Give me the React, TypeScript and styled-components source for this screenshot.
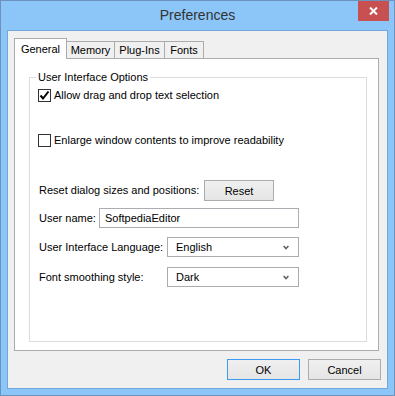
import styled, { createGlobalStyle } from "styled-components";

const GlobalStyle = createGlobalStyle`
  html, body {
    margin: 0;
    padding: 0;
  }
  body {
    font-family: "Liberation Sans", Arial, sans-serif;
    font-size: 11px;
    color: #000;
    background: #fff;
  }
  * {
    box-sizing: border-box;
  }
`;

const Window = styled.div`
  width: 395px;
  height: 396px;
  display: flex;
  flex-direction: column;
  background-color: #8cc5f7;
  border: 1px solid #6b93bd;
  padding: 0 6px 6px;
`;

const TitleBar = styled.div`
  height: 29px;
  display: grid;
  grid-template-columns: 1fr auto 1fr;
  align-items: start;
`;

const Title = styled.div`
  grid-column: 2;
  line-height: 29px;
  font-size: 14px;
  color: #333;
`;

const CloseButton = styled.div`
  grid-column: 3;
  justify-self: end;
  width: 31px;
  height: 20px;
  margin-right: -1px;
  background-color: #c75050;
  display: flex;
  align-items: center;
  justify-content: center;
`;

const Client = styled.div`
  flex: 1;
  display: flex;
  flex-direction: column;
  background-color: #f0f0f0;
  border: 1px solid #73a7da;
  padding: 7px 8px 8px 6px;
`;

const TabStrip = styled.div`
  height: 20px;
  display: flex;
  align-items: flex-end;
`;

const Tab = styled.div<{ $active?: boolean; $width: number }>`
  position: relative;
  width: ${({ $width }) => $width}px;
  height: ${({ $active }) => ($active ? "21px" : "17px")};
  margin-bottom: ${({ $active }) => ($active ? "-1px" : "0")};
  margin-left: -1px;
  padding: ${({ $active }) => ($active ? "3px 0 0" : "1px 0 0")};
  border: 1px solid #acacac;
  border-bottom: none;
  background-color: ${({ $active }) => ($active ? "#fff" : "#f0f0f0")};
  z-index: ${({ $active }) => ($active ? 2 : 1)};
  text-align: center;
  line-height: 15px;
  &:first-child {
    margin-left: 0;
  }
`;

const Panel = styled.div`
  flex: 1;
  display: flex;
  flex-direction: column;
  background-color: #fff;
  border: 1px solid #acacac;
`;

const GroupBox = styled.div`
  flex: 1;
  display: flex;
  flex-direction: column;
  margin: 18px 11px 8px 14px;
  padding: 0 8px;
  border: 1px solid #dcdcdc;
`;

const Legend = styled.div`
  align-self: flex-start;
  margin: -8px 0 0 -2px;
  padding: 0 2px;
  line-height: 15px;
  background-color: #fff;
`;

const CheckRow = styled.label<{ $top: number }>`
  display: flex;
  align-items: center;
  gap: 3px;
  height: 13px;
  margin-top: ${({ $top }) => $top}px;
  line-height: 13px;
`;

const Box = styled.span`
  width: 13px;
  height: 13px;
  flex: none;
  border: 1px solid #333;
  background-color: #fff;
  display: flex;
`;

const FormRow = styled.div<{ $top: number; $label: number; $height: number }>`
  display: grid;
  grid-template-columns: ${({ $label }) => $label}px auto;
  align-items: center;
  height: ${({ $height }) => $height}px;
  margin-top: ${({ $top }) => $top}px;
  padding-left: 1px;
`;

const Label = styled.span`
  line-height: 15px;
  white-space: nowrap;
`;

const PushButton = styled.div<{ $default?: boolean; $width: number }>`
  width: ${({ $width }) => $width}px;
  height: 21px;
  display: flex;
  align-items: center;
  justify-content: center;
  border: 1px solid ${({ $default }) => ($default ? "#3c9bf0" : "#acacac")};
  background: linear-gradient(#f0f0f0, #e5e5e5);
`;

const TextBox = styled.div`
  width: 200px;
  height: 20px;
  display: flex;
  align-items: center;
  padding-left: 5px;
  border: 1px solid #abadb3;
  background-color: #fff;
`;

const ComboBox = styled.div`
  width: 132px;
  height: 20px;
  display: flex;
  align-items: center;
  justify-content: space-between;
  padding: 0 9px 0 8px;
  border: 1px solid #acacac;
  background-color: #fff;
`;

const ButtonBar = styled.div`
  display: flex;
  justify-content: flex-end;
  gap: 8px;
  margin: 8px -2px 0 0;
`;

const Check = () => (
  <svg width="11" height="11" viewBox="0 0 11 11">
    <path d="M1.5 5.5 L4 8.5 L9.5 1.5" fill="none" stroke="#000" strokeWidth="2" />
  </svg>
);

const Chevron = () => (
  <svg width="6" height="5" viewBox="0 0 6 5">
    <path d="M0.6 1 L3 3.6 L5.4 1" fill="none" stroke="#606060" strokeWidth="1.5" />
  </svg>
);

const App = () => {
  return (
    <>
      <GlobalStyle />
      <Window>
        <TitleBar>
          <Title>Preferences</Title>
          <CloseButton>
            <svg width="9" height="8" viewBox="0 0 9 8">
              <path d="M1 0.5 L8 7.5 M8 0.5 L1 7.5" stroke="#fff" strokeWidth="2" />
            </svg>
          </CloseButton>
        </TitleBar>
        <Client>
          <TabStrip>
            <Tab $active $width={53}>
              General
            </Tab>
            <Tab $width={49}>Memory</Tab>
            <Tab $width={51}>Plug-Ins</Tab>
            <Tab $width={40}>Fonts</Tab>
          </TabStrip>
          <Panel>
            <GroupBox>
              <Legend>User Interface Options</Legend>
              <CheckRow $top={4}>
                <Box>
                  <Check />
                </Box>
                Allow drag and drop text selection
              </CheckRow>
              <CheckRow $top={32}>
                <Box />
                Enlarge window contents to improve readability
              </CheckRow>
              <FormRow $top={33} $label={165} $height={21}>
                <Label>Reset dialog sizes and positions:</Label>
                <PushButton $width={70}>Reset</PushButton>
              </FormRow>
              <FormRow $top={7} $label={60} $height={20}>
                <Label>User name:</Label>
                <TextBox>SoftpediaEditor</TextBox>
              </FormRow>
              <FormRow $top={9} $label={128} $height={20}>
                <Label>User Interface Language:</Label>
                <ComboBox>
                  English
                  <Chevron />
                </ComboBox>
              </FormRow>
              <FormRow $top={10} $label={128} $height={20}>
                <Label>Font smoothing style:</Label>
                <ComboBox>
                  Dark
                  <Chevron />
                </ComboBox>
              </FormRow>
            </GroupBox>
          </Panel>
          <ButtonBar>
            <PushButton $default $width={73}>
              OK
            </PushButton>
            <PushButton $width={73}>Cancel</PushButton>
          </ButtonBar>
        </Client>
      </Window>
    </>
  );
};

export default App;
